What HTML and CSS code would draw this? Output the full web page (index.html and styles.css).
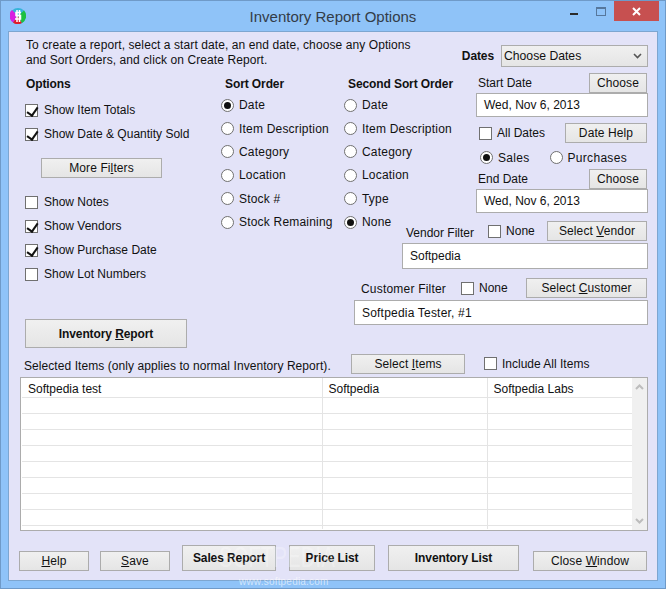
FILE: index.html
```html
<!DOCTYPE html>
<html lang="en">
<head>
  <meta charset="UTF-8">
  <title>Inventory Report Options</title>
  <link rel="stylesheet" href="styles.css">
</head>
<body>
  <div class="window">
    <div class="titlebar">
      <svg class="appicon" width="16" height="16" viewBox="0 0 16 16">
        <circle cx="8" cy="8" r="8" fill="#35b4d8"/>
        <path d="M8 8L2 2A8 8 0 0 0 3 14.5Z" fill="#d820e0"/>
        <path d="M8 8L3 14.5A8 8 0 0 0 12 15Z" fill="#e01c28"/>
        <path d="M8 8L12 15A8 8 0 0 0 14 2.5Z" fill="#1cc040"/>
        <path d="M11 4.5H6V7.5H10.5V11H5M7 2V14M9.5 2V14" stroke="#fff" stroke-width="1.5" fill="none"/>
      </svg>
      <div class="title">Inventory Report Options</div>
      <div class="wincontrols">
        <svg class="wmin" width="8" height="3"><rect width="8" height="2" fill="#2b2b2b"/></svg>
        <svg class="wmax" width="10" height="9"><rect x="0.5" y="0.5" width="9" height="8" fill="none" stroke="#56779c"/><rect width="10" height="2" fill="#56779c"/></svg>
        <div class="wclose">
          <svg width="9" height="9" viewBox="0 0 9 9"><path d="M1 1L8 8M8 1L1 8" stroke="#fff" stroke-width="2"/></svg>
        </div>
      </div>
    </div>

    <div class="client">
      <div class="head">
        <p class="intro">To create a report, select a start date, an end date, choose any Options<br>and Sort Orders, and click on Create Report.</p>
        <div class="dates">
          <span class="bold">Dates</span>
          <div class="select">Choose Dates
            <svg width="9" height="6" viewBox="0 0 9 6"><path d="M1 1L4.5 4.5L8 1" stroke="#555" stroke-width="1.6" fill="none"/></svg>
          </div>
        </div>
      </div>

      <div class="form">
        <div class="options">
          <h4>Options</h4>
          <label class="check"><span class="cb on"></span>Show Item Totals</label>
          <label class="check"><span class="cb on"></span>Show Date &amp; Quantity Sold</label>
          <button class="btn filters">More Fi<u>l</u>ters</button>
          <label class="check"><span class="cb"></span>Show Notes</label>
          <label class="check"><span class="cb on"></span>Show Vendors</label>
          <label class="check"><span class="cb on"></span>Show Purchase Date</label>
          <label class="check"><span class="cb"></span>Show Lot Numbers</label>
        </div>

        <div class="sort">
          <h4>Sort Order</h4>
          <label class="radio"><span class="rb on"></span>Date</label>
          <label class="radio"><span class="rb"></span>Item Description</label>
          <label class="radio"><span class="rb"></span>Category</label>
          <label class="radio"><span class="rb"></span>Location</label>
          <label class="radio"><span class="rb"></span>Stock #</label>
          <label class="radio"><span class="rb"></span>Stock Remaining</label>
        </div>

        <div class="sort second">
          <h4>Second Sort Order</h4>
          <label class="radio"><span class="rb"></span>Date</label>
          <label class="radio"><span class="rb"></span>Item Description</label>
          <label class="radio"><span class="rb"></span>Category</label>
          <label class="radio"><span class="rb"></span>Location</label>
          <label class="radio"><span class="rb"></span>Type</label>
          <label class="radio"><span class="rb on"></span>None</label>
        </div>

        <div class="range">
          <div class="rowlabel">
            <span>Start Date</span>
            <button class="btn choose">Choose</button>
          </div>
          <div class="field datefield">Wed, Nov 6, 2013</div>
          <div class="rowlabel alldates">
            <label class="check"><span class="cb"></span>All Dates</label>
            <button class="btn datehelp">Date Help</button>
          </div>
          <div class="kind">
            <label class="radio"><span class="rb on"></span>Sales</label>
            <label class="radio"><span class="rb"></span>Purchases</label>
          </div>
          <div class="rowlabel">
            <span>End Date</span>
            <button class="btn choose">Choose</button>
          </div>
          <div class="field datefield">Wed, Nov 6, 2013</div>
        </div>

        <div class="filter vendor">
          <div class="filterhead">
            <span class="filtername">Vendor Filter</span>
            <label class="check"><span class="cb"></span>None</label>
            <button class="btn selectv">Select <u>V</u>endor</button>
          </div>
          <div class="field">Softpedia</div>
        </div>

        <div class="filter customer">
          <div class="filterhead">
            <span class="filtername">Customer Filter</span>
            <label class="check"><span class="cb"></span>None</label>
            <button class="btn selectc">Select <u>C</u>ustomer</button>
          </div>
          <div class="field">Softpedia Tester, #1</div>
        </div>

        <button class="btn bold report">Inventory <u>R</u>eport</button>
      </div>

      <div class="itemsbar">
        <span class="itemsnote">Selected Items (only applies to normal Inventory Report).</span>
        <button class="btn selecti">Select <u>I</u>tems</button>
        <label class="check"><span class="cb"></span>Include All Items</label>
      </div>

      <div class="tablewrap">
        <table class="items">
          <tr><td>Softpedia test</td><td>Softpedia</td><td>Softpedia Labs</td></tr>
          <tr><td></td><td></td><td></td></tr>
          <tr><td></td><td></td><td></td></tr>
          <tr><td></td><td></td><td></td></tr>
          <tr><td></td><td></td><td></td></tr>
          <tr><td></td><td></td><td></td></tr>
          <tr><td></td><td></td><td></td></tr>
          <tr><td></td><td></td><td></td></tr>
          <tr><td></td><td></td><td></td></tr>
          <tr class="tail"><td></td><td></td><td></td></tr>
        </table>
        <div class="scroll">
          <svg width="9" height="6" viewBox="0 0 9 6"><path d="M1 5L4.5 1.5L8 5" stroke="#bdbdbd" stroke-width="2" fill="none"/></svg>
          <svg width="9" height="6" viewBox="0 0 9 6"><path d="M1 1L4.5 4.5L8 1" stroke="#bdbdbd" stroke-width="2" fill="none"/></svg>
        </div>
      </div>

      <div class="footer">
        <button class="btn help"><u>H</u>elp</button>
        <button class="btn save"><u>S</u>ave</button>
        <button class="btn bold sales">Sales Report</button>
        <button class="btn bold price">Price List</button>
        <button class="btn bold invlist">Inventory List</button>
        <button class="btn closewin">Close <u>W</u>indow</button>
      </div>
    </div>
    <div class="wm-big">SOFTPEDIA</div>
    <div class="wm-small">www.softpedia.com</div>
  </div>
</body>
</html>
```

FILE: styles.css
```css
* {
  box-sizing: border-box;
}
body {
  margin: 0;
  background-color: #fff;
  font-family: "Liberation Sans", Arial, sans-serif;
  font-size: 12px;
  color: #111;
}
.window {
  position: relative;
  width: 666px;
  height: 589px;
  background-color: #8fc3f8;
  border: 1px solid #6f9ac8;
  overflow: hidden;
}
.titlebar {
  display: flex;
  align-items: center;
  height: 30px;
  padding-left: 9px;
  position: relative;
}
.appicon {
  margin-top: -1px;
}
.title {
  flex: 1;
  text-align: center;
  font-size: 15px;
  color: #333c48;
  margin-left: -25px;
  margin-top: 1px;
}
.wincontrols {
  position: absolute;
  right: 6px;
  top: 0;
  display: flex;
  align-items: center;
}
.wmin {
  margin-right: 18px;
  margin-top: 6px;
}
.wmax {
  margin-right: 8px;
}
.wclose {
  width: 45px;
  height: 20px;
  background-color: #c75050;
  display: flex;
  align-items: center;
  justify-content: center;
}
.client {
  width: 650px;
  height: 550px;
  margin-left: 7px;
  background-color: #e3e3f8;
  border: 1px solid #7da6d0;
}
.head {
  display: flex;
  justify-content: space-between;
  height: 38px;
  padding: 6px 9px 0 17px;
}
.intro {
  margin: 0;
  line-height: 15px;
  letter-spacing: 0.09px;
}
.dates {
  display: flex;
  align-items: center;
  gap: 7px;
  height: 22px;
  margin-top: 7px;
}
.bold,
h4 {
  font-weight: bold;
  letter-spacing: -0.1px;
}
.select {
  width: 147px;
  height: 22px;
  display: flex;
  justify-content: space-between;
  align-items: center;
  padding: 0 5px 0 2px;
  border: 1px solid #acacac;
  background: linear-gradient(#f0f0f0, #e5e5e5);
  font-size: 12.2px;
}
.form {
  display: grid;
  grid-template-columns: 195px 123px 10px 48px 74px 172px;
  grid-template-rows: 141px 55px 53px 29px;
  padding-left: 17px;
}
h4 {
  margin: 0;
  font-size: 12px;
  line-height: 15px;
}
.options {
  grid-column: 1;
  grid-row: 1 / 4;
  padding-top: 7px;
}
.options h4 {
  margin-bottom: 6px;
}
.check {
  display: flex;
  align-items: center;
  gap: 5px;
  white-space: nowrap;
}
.options .check {
  height: 24px;
  margin-left: -1px;
  gap: 6px;
}
.cb {
  display: block;
  position: relative;
  width: 13px;
  height: 13px;
  border: 1px solid #707070;
  background-color: #fff;
}
.cb.on::after {
  content: "";
  position: absolute;
  left: 3px;
  top: 0;
  width: 5px;
  height: 9px;
  border: solid #111;
  border-width: 0 2px 2px 0;
  transform: rotate(35deg);
}
.btn {
  display: block;
  padding: 0;
  height: 20px;
  border: 1px solid #acacac;
  background: linear-gradient(#f0f0f0, #e5e5e5);
  font-family: inherit;
  font-size: 12px;
  letter-spacing: 0.1px;
  color: #111;
  white-space: nowrap;
}
.btn.bold {
  letter-spacing: -0.1px;
}
.filters {
  width: 121px;
  margin: 12px 0 12px 15px;
}
.sort {
  grid-column: 2;
  grid-row: 1 / 4;
  padding-top: 7px;
}
.sort h4 {
  margin-bottom: 1.5px;
  padding-left: 4px;
}
.second {
  grid-column: 3 / 6;
  grid-row: 1 / 3;
}
.radio {
  display: flex;
  align-items: center;
  gap: 5px;
  height: 23.4px;
  letter-spacing: 0.2px;
  white-space: nowrap;
}
.rb {
  display: block;
  position: relative;
  width: 13px;
  height: 13px;
  border: 1px solid #707070;
  border-radius: 50%;
  background-color: #fff;
}
.rb.on::after {
  content: "";
  position: absolute;
  left: 2px;
  top: 2px;
  width: 7px;
  height: 7px;
  border-radius: 50%;
  background-color: #111;
}
.range {
  grid-column: 6;
  grid-row: 1;
  margin-top: 3px;
}
.rowlabel {
  display: flex;
  justify-content: space-between;
  align-items: center;
  padding: 0 1px 0 2px;
}
.choose {
  width: 58px;
}
.field {
  display: flex;
  align-items: center;
  height: 25px;
  border: 1px solid #acacac;
  background-color: #fff;
  padding-left: 7px;
}
.datefield {
  height: 24px;
  margin-bottom: 6px;
}
.alldates {
  padding-left: 3px;
}
.datehelp {
  width: 82px;
}
.kind {
  display: flex;
  gap: 20px;
  padding-left: 4px;
  height: 21px;
  margin: 4px 0 1px;
}
.kind .radio {
  height: 21px;
  letter-spacing: 0.3px;
}
.filter {
  align-self: start;
}
.filterhead {
  display: flex;
  align-items: center;
  height: 20px;
  margin-bottom: 2px;
  padding-right: 1px;
}
.filtername {
  padding-top: 3px;
}
.vendor {
  grid-column: 5 / 7;
  grid-row: 2;
  margin-top: 10px;
}
.vendor .filtername {
  margin-left: 4px;
}
.vendor .check {
  margin-left: 14px;
}
.vendor .field {
  height: 26px;
}
.customer {
  grid-column: 4 / 7;
  grid-row: 3 / 5;
  margin-top: 12px;
}
.customer .filtername {
  margin-left: 7px;
  letter-spacing: 0.2px;
  padding-top: 1px;
}
.customer .check {
  margin-left: 15px;
}
.customer .field {
  letter-spacing: 0.2px;
}
.selectv {
  width: 100px;
  margin-left: auto;
}
.selectc {
  width: 121px;
  margin-left: auto;
}
.report {
  grid-column: 1;
  grid-row: 4;
  width: 162px;
  height: 29px;
  margin-left: -1px;
}
.itemsbar {
  display: flex;
  align-items: center;
  height: 29px;
  padding-top: 2px;
  padding-left: 15px;
}
.itemsnote {
  width: 327px;
  padding-top: 4px;
  letter-spacing: 0.07px;
  white-space: nowrap;
}
.selecti {
  width: 114px;
}
.itemsbar .check {
  margin-left: 19px;
}
.tablewrap {
  display: flex;
  width: 628px;
  height: 154px;
  margin-left: 11px;
  padding-left: 1px;
  border: 1px solid #acacac;
  background-color: #fff;
  overflow: hidden;
}
.items {
  width: 610px;
  border-collapse: collapse;
  table-layout: fixed;
  align-self: flex-start;
}
.items td {
  height: 16px;
  padding: 0 0 0 6px;
  border-right: 1px solid #e4e4e4;
  border-bottom: 1px solid #e4e4e4;
}
.items tr:first-child td {
  height: 19px;
  padding-top: 3px;
}
.items .tail td {
  height: 4px;
  border-bottom: none;
}
.items td:last-child {
  border-right: none;
}
.items td:nth-child(1) {
  width: 300px;
}
.items td:nth-child(2) {
  width: 165px;
}
.scroll {
  flex: 1;
  display: flex;
  flex-direction: column;
  justify-content: space-between;
  align-items: center;
  padding: 6px 0;
  background-color: #f0f0f0;
}
.footer {
  display: flex;
  align-items: flex-end;
  margin-top: 14px;
  padding-left: 10px;
}
.help {
  width: 70px;
  margin-right: 11px;
}
.save {
  width: 70px;
  margin-right: 12px;
}
.sales {
  width: 94px;
  height: 26px;
  margin-right: 13px;
}
.price {
  width: 86px;
  height: 26px;
  margin-right: 13px;
}
.invlist {
  width: 131px;
  height: 26px;
  margin-right: 14px;
}
.closewin {
  width: 114px;
}
.wm-big {
  position: absolute;
  left: 218px;
  top: 545px;
  font-size: 20px;
  line-height: 23px;
  letter-spacing: 0.3px;
  color: rgba(255, 255, 255, 0.3);
  transform: scaleY(1.5);
  pointer-events: none;
}
.wm-small {
  position: absolute;
  left: 238px;
  top: 575px;
  font-size: 10px;
  letter-spacing: 0.2px;
  color: rgba(255, 255, 255, 0.6);
}
```
